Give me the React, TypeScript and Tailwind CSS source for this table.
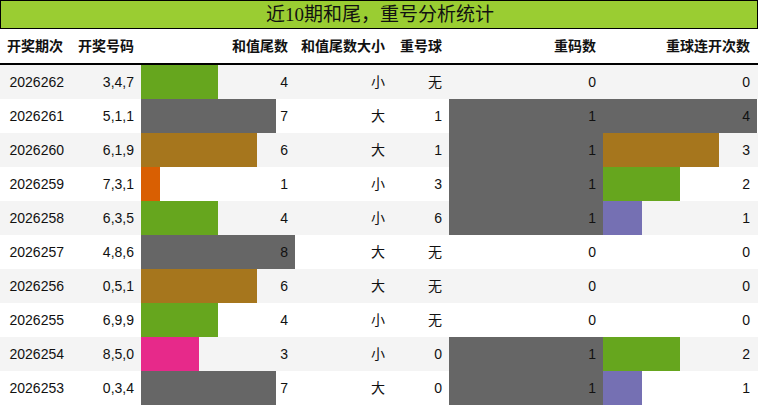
import React from "react";

interface DrawRow {
  issue: string;
  nums: string;
  tail: number;
  tailColor: string;
  size: string;
  repeat: string;
  codes: number;
  streak: number;
  streakColor: string;
}

const rows: DrawRow[] = [
  { issue: "2026262", nums: "3,4,7", tail: 4, tailColor: "bg-[#66a61e]", size: "小", repeat: "无", codes: 0, streak: 0, streakColor: "" },
  { issue: "2026261", nums: "5,1,1", tail: 7, tailColor: "bg-[#666666]", size: "大", repeat: "1", codes: 1, streak: 4, streakColor: "bg-[#666666]" },
  { issue: "2026260", nums: "6,1,9", tail: 6, tailColor: "bg-[#a6761d]", size: "大", repeat: "1", codes: 1, streak: 3, streakColor: "bg-[#a6761d]" },
  { issue: "2026259", nums: "7,3,1", tail: 1, tailColor: "bg-[#d95f02]", size: "小", repeat: "3", codes: 1, streak: 2, streakColor: "bg-[#66a61e]" },
  { issue: "2026258", nums: "6,3,5", tail: 4, tailColor: "bg-[#66a61e]", size: "小", repeat: "6", codes: 1, streak: 1, streakColor: "bg-[#7570b3]" },
  { issue: "2026257", nums: "4,8,6", tail: 8, tailColor: "bg-[#666666]", size: "大", repeat: "无", codes: 0, streak: 0, streakColor: "" },
  { issue: "2026256", nums: "0,5,1", tail: 6, tailColor: "bg-[#a6761d]", size: "大", repeat: "无", codes: 0, streak: 0, streakColor: "" },
  { issue: "2026255", nums: "6,9,9", tail: 4, tailColor: "bg-[#66a61e]", size: "小", repeat: "无", codes: 0, streak: 0, streakColor: "" },
  { issue: "2026254", nums: "8,5,0", tail: 3, tailColor: "bg-[#e7298a]", size: "小", repeat: "0", codes: 1, streak: 2, streakColor: "bg-[#66a61e]" },
  { issue: "2026253", nums: "0,3,4", tail: 7, tailColor: "bg-[#666666]", size: "大", repeat: "0", codes: 1, streak: 1, streakColor: "bg-[#7570b3]" },
];

const cols = "grid grid-cols-[70px_71px_154px_97px_57px_154px_154px]";

const BarCell: React.FC<{ value: number; max: number; color: string }> = ({ value, max, color }) => (
  <div className="relative flex items-center justify-end pr-[7px]">
    {value > 0 && (
      <div
        className={`absolute left-0 top-0 bottom-0 ${color}`}
        style={{ width: `${(value / max) * 100}%` }}
      />
    )}
    <span className="relative">{value}</span>
  </div>
);

const App: React.FC = () => {
  const headers = ["开奖期次", "开奖号码", "和值尾数", "和值尾数大小", "重号球", "重码数", "重球连开次数"];

  return (
    <div className="w-[758px] h-[406px] bg-white text-[#111] font-['Liberation_Sans','Noto_Sans_CJK_SC',sans-serif] text-[14px] overflow-hidden">
      <div className="h-[29px] border border-black bg-[#9acd32] flex items-center justify-center">
        <span className="text-[19px] leading-none text-[#111] font-['Liberation_Serif','Noto_Sans_CJK_SC',serif] pl-[2px]">
          近10期和尾，重号分析统计
        </span>
      </div>

      <div className={`${cols} h-[36px] border-b-2 border-black font-bold`}>
        {headers.map((h) => (
          <div key={h} className="flex items-center justify-end pr-[7px] whitespace-nowrap">
            {h}
          </div>
        ))}
      </div>

      {rows.map((r, i) => (
        <div
          key={r.issue}
          className={`${cols} h-[34px] ${i % 2 === 0 ? "bg-[#f4f4f4]" : "bg-white"}`}
        >
          <div className="flex items-center justify-end pr-[6px]">{r.issue}</div>
          <div className="flex items-center justify-end pr-[7px]">{r.nums}</div>
          <BarCell value={r.tail} max={8} color={r.tailColor} />
          <div className="flex items-center justify-end pr-[7px]">{r.size}</div>
          <div className="flex items-center justify-end pr-[7px]">{r.repeat}</div>
          <BarCell value={r.codes} max={1} color="bg-[#666666]" />
          <BarCell value={r.streak} max={4} color={r.streakColor} />
        </div>
      ))}
    </div>
  );
};

export default App;
